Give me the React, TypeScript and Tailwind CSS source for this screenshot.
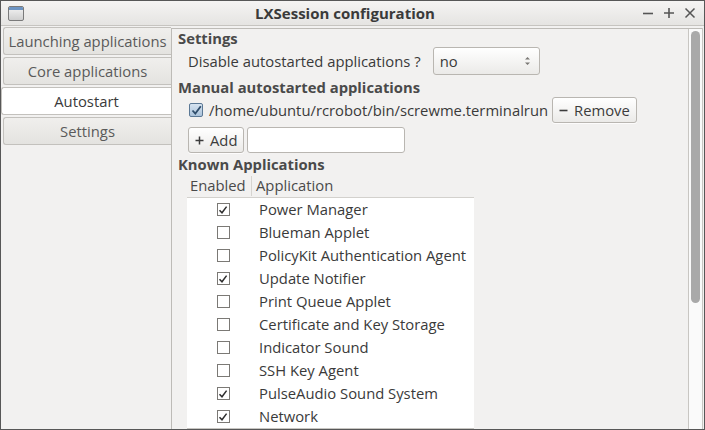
import React from 'react';

const FONT = { fontFamily: '"Open Sans", "Noto Sans", "DejaVu Sans", sans-serif' };

const apps: { name: string; on: boolean }[] = [
  { name: 'Power Manager', on: true },
  { name: 'Blueman Applet', on: false },
  { name: 'PolicyKit Authentication Agent', on: false },
  { name: 'Update Notifier', on: true },
  { name: 'Print Queue Applet', on: false },
  { name: 'Certificate and Key Storage', on: false },
  { name: 'Indicator Sound', on: false },
  { name: 'SSH Key Agent', on: false },
  { name: 'PulseAudio Sound System', on: true },
  { name: 'Network', on: true },
];

const tabs = ['Launching applications', 'Core applications', 'Autostart', 'Settings'];

function Check({ on }: { on: boolean }) {
  return (
    <div className="w-[13px] h-[13px] border border-[#7b7975] bg-white flex items-center justify-center">
      {on && (
        <svg width="10" height="10" viewBox="0 0 10 10">
          <path d="M1.5 5.2 L4 7.8 L8.6 1.6" fill="none" stroke="#2e2e2e" strokeWidth="1.5" />
        </svg>
      )}
    </div>
  );
}

function Btn({ children }: { children: React.ReactNode }) {
  return (
    <div className="h-[26px] px-[6px] flex items-center gap-[6px] rounded-[3px] border border-[#b9b6b1] bg-gradient-to-b from-white to-[#ebeae8] shadow-[0_1px_0_rgba(255,255,255,0.8)] text-[#3c3c3c]">
      {children}
    </div>
  );
}

export default function App() {
  return (
    <div
      className="w-[705px] h-[430px] border border-[#575757] bg-[#f2f1f0] flex flex-col overflow-hidden text-[14.8px] text-[#3a3a3a]"
      style={FONT}
    >
      {/* title bar */}
      <div className="h-[25px] shrink-0 relative flex items-center bg-gradient-to-b from-[#f5f4f3] to-[#e5e4e2] border-b border-[#c6c4c0]">
        <div className="ml-[7px] w-[16px] h-[15px] rounded-[2px] border border-[#7a7a7a] bg-gradient-to-b from-[#f4f4f4] to-[#cfcfcf] overflow-hidden">
          <div className="h-[3px] bg-[#6d95c4]" />
        </div>
        <div className="absolute inset-0 pr-[15px] flex items-center justify-center font-bold text-[15px] text-[#3a3a3a] pointer-events-none">
          LXSession configuration
        </div>
        <div className="ml-auto mr-[8px] flex items-center gap-[9px]">
          <svg width="12" height="12" viewBox="0 0 12 12">
            <path d="M1 6.5 H11" stroke="#555" strokeWidth="1.6" />
          </svg>
          <svg width="12" height="12" viewBox="0 0 12 12">
            <path d="M1 6 H11 M6 1 V11" stroke="#555" strokeWidth="1.6" />
          </svg>
          <svg width="12" height="12" viewBox="0 0 12 12">
            <path d="M1.5 1.5 L10.5 10.5 M10.5 1.5 L1.5 10.5" stroke="#555" strokeWidth="1.5" />
          </svg>
        </div>
      </div>

      <div className="flex-1 flex min-h-0">
        {/* sidebar tabs */}
        <div className="w-[170px] shrink-0 pt-[1px] flex flex-col gap-[2px]">
          {tabs.map((t) =>
            t === 'Autostart' ? (
              <div
                key={t}
                className="h-[28px] border border-[#c3c1bd] border-r-0 rounded-l-[3px] bg-white flex items-center justify-center text-[#3a3a3a]"
              >
                {t}
              </div>
            ) : (
              <div
                key={t}
                className="h-[28px] ml-[2px] border border-[#c3c1bd] border-r-0 rounded-l-[3px] bg-gradient-to-b from-[#f0efed] to-[#e4e3e0] flex items-center justify-center text-[#5a5a5a]"
              >
                {t}
              </div>
            ),
          )}
        </div>

        {/* content panel */}
        <div className="flex-1 mt-[2px] border-l border-t border-[#bdbbb7] flex min-w-0">
          <div className="flex-1 min-w-0 flex flex-col pl-[6px]">
            <div className="h-[18px] flex items-center font-bold text-[#4a4a4a]">Settings</div>
            <div className="flex items-center pl-[10px] h-[28px]">
              <span>Disable autostarted applications ?</span>
              <div className="ml-[12px] w-[107px] h-[28px] rounded-[3px] border border-[#b9b6b1] bg-gradient-to-b from-white to-[#ebeae8] flex items-center pl-[6px] pr-[8px]">
                <span>no</span>
                <svg className="ml-auto" width="7" height="12" viewBox="0 0 7 12">
                  <path d="M1 4.5 L3.5 2 L6 4.5 Z M1 7.5 L3.5 10 L6 7.5 Z" fill="#7a7875" />
                </svg>
              </div>
            </div>
            <div className="h-[19px] mt-[3px] flex items-center font-bold text-[#4a4a4a]">
              Manual autostarted applications
            </div>
            <div className="flex items-center pl-[11px] h-[26px]">
              <div className="w-[14px] h-[14px] rounded-[2px] border border-[#5b7895] bg-gradient-to-b from-[#d6e3f0] to-[#aac2da] flex items-center justify-center">
                <svg width="11" height="11" viewBox="0 0 11 11">
                  <path d="M1.5 5.5 L4.3 8.6 L9.8 1.2" fill="none" stroke="#2f4d6b" strokeWidth="1.8" />
                </svg>
              </div>
              <span className="ml-[6px]">/home/ubuntu/rcrobot/bin/screwme.terminalrun</span>
              <div className="ml-[4px]">
                <Btn>
                  <svg width="9" height="9" viewBox="0 0 9 9">
                    <path d="M0.5 4.5 H8.5" stroke="#3c3c3c" strokeWidth="1.6" />
                  </svg>
                  <span>Remove</span>
                </Btn>
              </div>
            </div>
            <div className="flex items-center pl-[10px] mt-[4px] gap-[3px]">
              <Btn>
                <svg width="9" height="9" viewBox="0 0 9 9">
                  <path d="M0.5 4.5 H8.5 M4.5 0.5 V8.5" stroke="#3c3c3c" strokeWidth="1.5" />
                </svg>
                <span>Add</span>
              </Btn>
              <div className="w-[158px] h-[26px] rounded-[3px] border border-[#b9b6b1] bg-white" />
            </div>
            <div className="h-[20px] mt-[1px] flex items-center font-bold text-[#4a4a4a]">Known Applications</div>

            {/* tree view */}
            <div className="ml-[9px] w-[287px] flex-1 flex flex-col min-h-0">
              <div className="h-[24px] shrink-0 flex items-center border-b border-[#d3d1cd] text-[#4a4a4a]">
                <div className="w-[65px] pl-[3px] h-[20px] flex items-center border-r border-[#d6d4d0]">Enabled</div>
                <div className="pl-[4px]">Application</div>
              </div>
              <div className="flex-1 bg-white overflow-hidden border-b border-[#c8c6c2]">
                {apps.map((a) => (
                  <div key={a.name} className="h-[23px] flex items-center">
                    <div className="w-[72px] flex justify-center">
                      <Check on={a.on} />
                    </div>
                    <span>{a.name}</span>
                  </div>
                ))}
              </div>
            </div>
          </div>

          {/* scrollbar */}
          <div className="w-[14px] shrink-0 border-l border-[#c8c6c2] bg-[#fafafa] pt-[2px] flex justify-center">
            <div className="w-[9px] h-[272px] rounded-[5px] bg-[#a9a9a9]" />
          </div>
        </div>
        <div className="w-[2px] shrink-0 border-l border-[#c8c6c2] mt-[2px]" />
      </div>
    </div>
  );
}
